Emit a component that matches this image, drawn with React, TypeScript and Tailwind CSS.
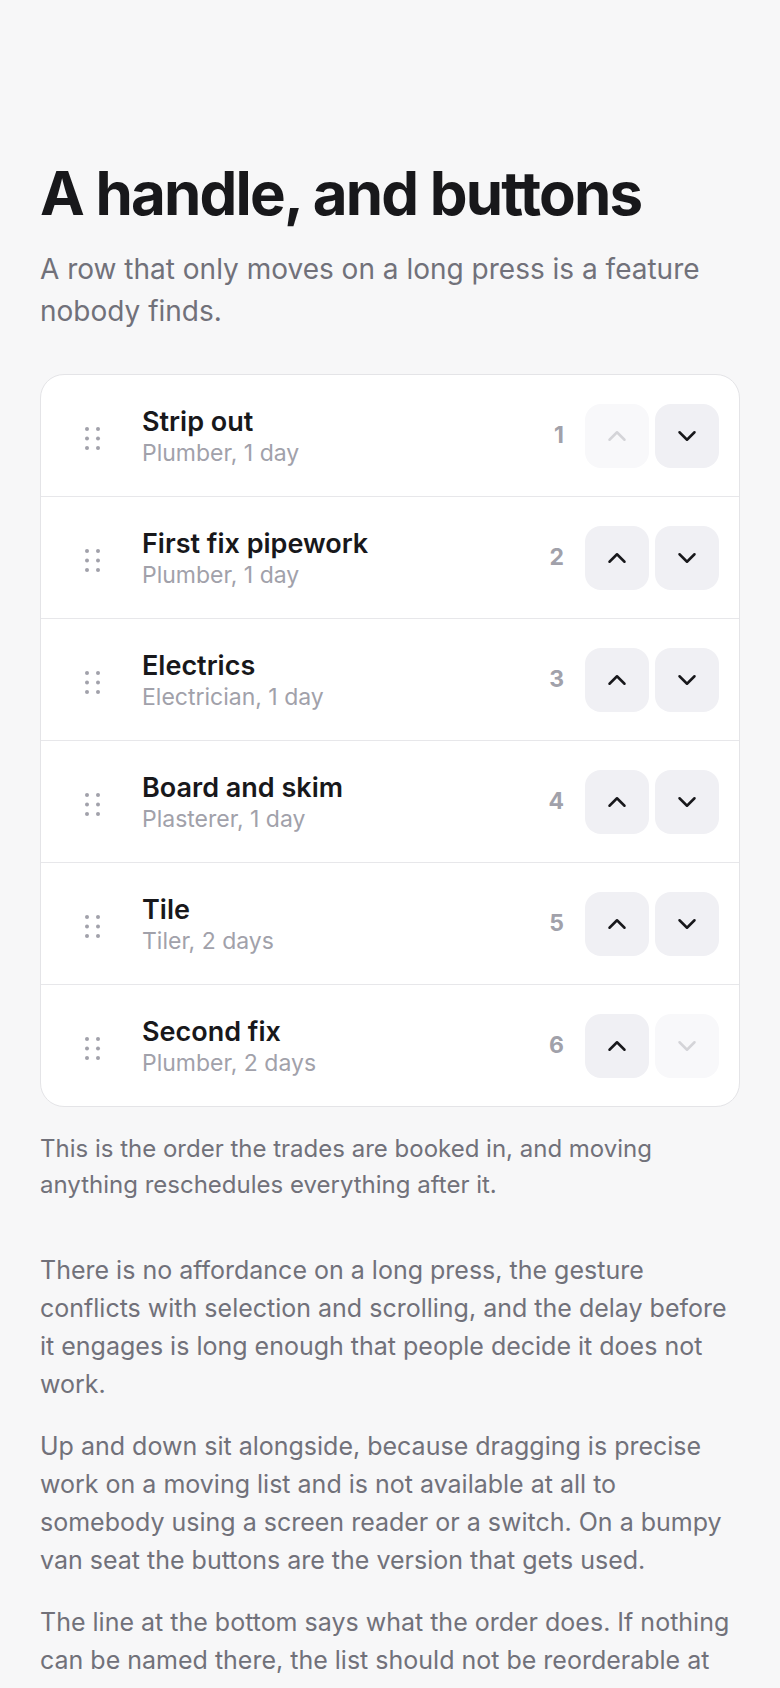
import { ChevronDown, ChevronUp } from "lucide-react";

const steps = [
  { title: "Strip out", detail: "Plumber, 1 day" },
  { title: "First fix pipework", detail: "Plumber, 1 day" },
  { title: "Electrics", detail: "Electrician, 1 day" },
  { title: "Board and skim", detail: "Plasterer, 1 day" },
  { title: "Tile", detail: "Tiler, 2 days" },
  { title: "Second fix", detail: "Plumber, 2 days" },
];

const Grip = () => (
  <svg width="16" height="24" viewBox="0 0 16 24" className="mt-1 shrink-0" fill="#a1a1aa">
    <circle cx="2" cy="3" r="2" />
    <circle cx="13" cy="3" r="2" />
    <circle cx="2" cy="12.5" r="2" />
    <circle cx="13" cy="12.5" r="2" />
    <circle cx="2" cy="22" r="2" />
    <circle cx="13" cy="22" r="2" />
  </svg>
);

const MoveButton = ({ dir, disabled }: { dir: "up" | "down"; disabled: boolean }) => (
  <button
    type="button"
    disabled={disabled}
    aria-label={dir === "up" ? "Move up" : "Move down"}
    className={
      disabled
        ? "flex h-16 w-16 items-center justify-center rounded-2xl bg-[#f8f8fa] text-[#d4d4d8]"
        : "flex h-16 w-16 items-center justify-center rounded-2xl bg-[#f0f0f4] text-[#18181b]"
    }
  >
    {dir === "up" ? <ChevronUp size={30} strokeWidth={2} /> : <ChevronDown size={30} strokeWidth={2} />}
  </button>
);

export default function App() {
  return (
    <div className="min-h-screen bg-[#f7f7f8] px-10 pt-[160px] pb-16 font-['Inter',sans-serif]">
      <h1 className="text-[60px] font-bold leading-[66px] tracking-[-0.03em] text-[#18181b]">
        A handle, and buttons
      </h1>
      <p className="mt-[22px] text-[28px] leading-[42px] text-[#71717a]">
        A row that only moves on a long press is a feature nobody finds.
      </p>

      <ul className="mt-[42px] overflow-hidden rounded-3xl border border-[#e4e4e7] bg-white">
        {steps.map((s, i) => (
          <li
            key={s.title}
            className="flex h-[122px] items-center border-b border-[#e7e7ea] pl-[44px] pr-5 last:h-[121px] last:border-b-0"
          >
            <Grip />
            <div className="ml-[41px] flex-1">
              <div className="text-[27px] font-semibold leading-[34px] text-[#18181b]">{s.title}</div>
              <div className="text-[23px] leading-7 text-[#a1a1aa]">{s.detail}</div>
            </div>
            <span className="mr-[21px] text-[23px] font-bold text-[#a1a1aa]">{i + 1}</span>
            <div className="flex gap-1.5">
              <MoveButton dir="up" disabled={i === 0} />
              <MoveButton dir="down" disabled={i === steps.length - 1} />
            </div>
          </li>
        ))}
      </ul>

      <p className="mt-6 text-[24px] leading-9 text-[#71717a]">
        This is the order the trades are booked in, and moving anything reschedules everything after it.
      </p>

      <div className="mt-12 flex flex-col gap-6 text-[25px] leading-[38px] text-[#71717a]">
        <p>
          There is no affordance on a long press, the gesture conflicts with selection and scrolling, and the delay
          before it engages is long enough that people decide it does not work.
        </p>
        <p>
          Up and down sit alongside, because dragging is precise work on a moving list and is not available at all
          to somebody using a screen reader or a switch. On a bumpy van seat the buttons are the version that gets
          used.
        </p>
        <p>
          The line at the bottom says what the order does. If nothing can be named there, the list should not be
          reorderable at all.
        </p>
      </div>
    </div>
  );
}
